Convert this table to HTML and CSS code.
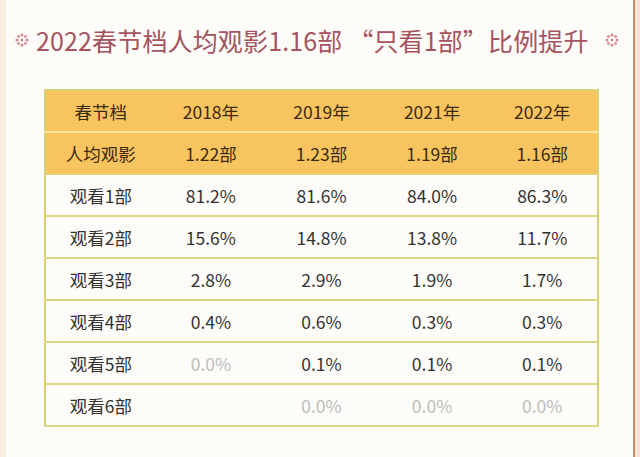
FILE: index.html
```html
<!DOCTYPE html>
<html lang="zh">
<head>
<meta charset="utf-8">
<link rel="stylesheet" href="styles.css">
</head>
<body>
<div class="frame">
  <div class="edge-left"></div>
  <div class="main">
    <h1 class="title">
      <svg class="flower" viewBox="0 0 16 16"><g fill="#d98b96"><circle cx="8" cy="3" r="1.6"/><circle cx="8" cy="13" r="1.6"/><circle cx="3" cy="8" r="1.6"/><circle cx="13" cy="8" r="1.6"/><circle cx="4.5" cy="4.5" r="1.4"/><circle cx="11.5" cy="11.5" r="1.4"/><circle cx="11.5" cy="4.5" r="1.4"/><circle cx="4.5" cy="11.5" r="1.4"/><circle cx="8" cy="8" r="1.2" fill="#c46a78"/></g></svg>
      <span class="title-text">2022春节档人均观影1.16部 “只看1部”比例提升</span>
      <svg class="flower flower-end" viewBox="0 0 16 16"><g fill="#d98b96"><circle cx="8" cy="3" r="1.6"/><circle cx="8" cy="13" r="1.6"/><circle cx="3" cy="8" r="1.6"/><circle cx="13" cy="8" r="1.6"/><circle cx="4.5" cy="4.5" r="1.4"/><circle cx="11.5" cy="11.5" r="1.4"/><circle cx="11.5" cy="4.5" r="1.4"/><circle cx="4.5" cy="11.5" r="1.4"/><circle cx="8" cy="8" r="1.2" fill="#c46a78"/></g></svg>
    </h1>
    <table class="data">
      <tr class="head">
        <td>春节档</td><td>2018年</td><td>2019年</td><td>2021年</td><td>2022年</td>
      </tr>
      <tr class="head avg">
        <td>人均观影</td><td>1.22部</td><td>1.23部</td><td>1.19部</td><td>1.16部</td>
      </tr>
      <tr><td>观看1部</td><td>81.2%</td><td>81.6%</td><td>84.0%</td><td>86.3%</td></tr>
      <tr><td>观看2部</td><td>15.6%</td><td>14.8%</td><td>13.8%</td><td>11.7%</td></tr>
      <tr><td>观看3部</td><td>2.8%</td><td>2.9%</td><td>1.9%</td><td>1.7%</td></tr>
      <tr><td>观看4部</td><td>0.4%</td><td>0.6%</td><td>0.3%</td><td>0.3%</td></tr>
      <tr><td>观看5部</td><td class="dim">0.0%</td><td>0.1%</td><td>0.1%</td><td>0.1%</td></tr>
      <tr><td>观看6部</td><td></td><td class="dim">0.0%</td><td class="dim">0.0%</td><td class="dim">0.0%</td></tr>
    </table>
  </div>
  <div class="edge-right"></div>
</div>
</body>
</html>
```

FILE: styles.css
```css
html, body {
  margin: 0;
  padding: 0;
  background: #fdfcf8;
  font-family: "Noto Sans CJK SC", "Noto Sans", sans-serif;
}
.frame {
  display: flex;
  width: 640px;
  height: 457px;
  overflow: hidden;
}
.edge-left {
  width: 6px;
  background: #f7eedd;
}
.main {
  flex: 1;
  padding: 0 0 0 38px;
}
.edge-right {
  width: 5px;
  border-left: 2px solid #c98a6c;
  background: #fae6d2;
}
.title {
  margin: 23px 0 0 -30px;
  height: 34px;
  display: flex;
  align-items: center;
  gap: 6px;
  font-size: 25px;
  letter-spacing: 0.15px;
  font-weight: 400;
  color: #a5535f;
  white-space: nowrap;
}
.flower {
  width: 16px;
  height: 16px;
}
.flower-end {
  margin-left: 9px;
}
.data {
  margin-top: 32px;
  width: 555px;
  border-collapse: collapse;
  border: 2px solid #d9d178;
  table-layout: fixed;
  font-size: 17.5px;
  color: #333;
}
.data td {
  height: 40px;
  padding: 0;
  text-align: center;
  border-bottom: 2px solid #dcd67e;
}
.data tr.head td {
  background: #f8c460;
  color: #3b2a12;
  border-bottom: 2px solid #fbe2a0;
}
.data tr.avg td {
  border-bottom: 2px solid #e2cf7a;
}
.data td.dim {
  color: #bcbcbc;
}
```
